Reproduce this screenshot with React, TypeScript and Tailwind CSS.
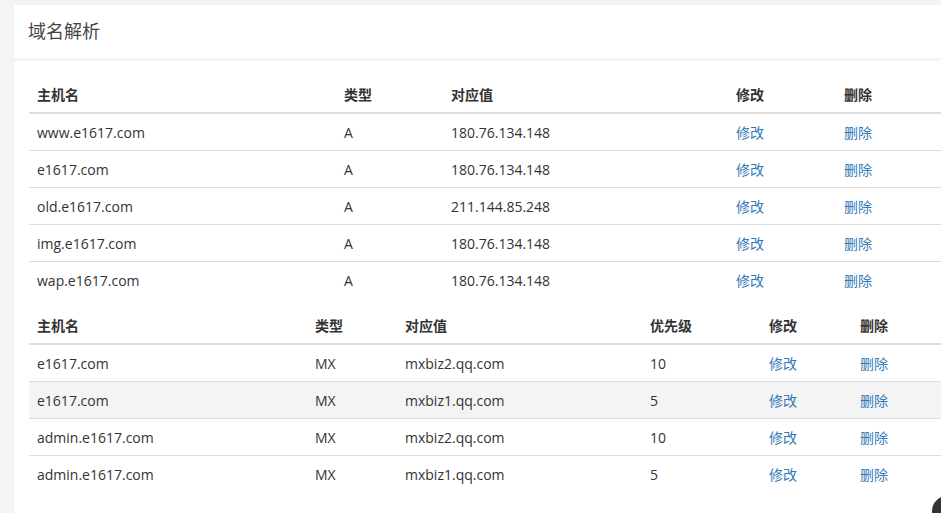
const t1 = [
  ["www.e1617.com", "A", "180.76.134.148"],
  ["e1617.com", "A", "180.76.134.148"],
  ["old.e1617.com", "A", "211.144.85.248"],
  ["img.e1617.com", "A", "180.76.134.148"],
  ["wap.e1617.com", "A", "180.76.134.148"],
];
const t2 = [
  ["e1617.com", "MX", "mxbiz2.qq.com", "10"],
  ["e1617.com", "MX", "mxbiz1.qq.com", "5"],
  ["admin.e1617.com", "MX", "mxbiz2.qq.com", "10"],
  ["admin.e1617.com", "MX", "mxbiz1.qq.com", "5"],
];
const g1 = "grid grid-cols-[307px_107px_285px_108px_1fr]";
const g2 = "grid grid-cols-[278px_90px_245px_119px_91px_1fr]";
const cell = "px-2 h-[36px] flex items-center";

export default function App() {
  return (
    <div className="w-[941px] h-[513px] overflow-hidden bg-[#f4f4f4] pt-[5px] pl-[14px] text-[14px] text-[#333] relative" style={{ fontFamily: '"Open Sans", "Noto Sans CJK SC", sans-serif' }}>
      <div className="bg-white h-[53px] flex items-center px-[14px] text-[18px] text-[#444]">域名解析</div>
      <div className="bg-white mt-[3px] h-[460px] pl-[15px] pt-[15px]">
        <div className={`${g1} font-bold border-b-2 border-[#ddd]`}>
          {["主机名", "类型", "对应值", "修改", "删除"].map((h) => (
            <div key={h} className={`${cell} h-[35px]`}>{h}</div>
          ))}
        </div>
        {t1.map((r, i) => (
          <div key={i} className={`${g1} ${i < t1.length - 1 ? "border-b border-[#ddd]" : ""}`}>
            {r.map((c, j) => <div key={j} className={cell}>{c}</div>)}
            <div className={`${cell} text-[#337ab7]`}>修改</div>
            <div className={`${cell} text-[#337ab7]`}>删除</div>
          </div>
        ))}
        <div className={`${g2} font-bold border-b-2 border-[#ddd] mt-[9px]`}>
          {["主机名", "类型", "对应值", "优先级", "修改", "删除"].map((h) => (
            <div key={h} className={`${cell} h-[35px]`}>{h}</div>
          ))}
        </div>
        {t2.map((r, i) => (
          <div key={i} className={`${g2} ${i < t2.length - 1 ? "border-b border-[#ddd]" : ""} ${i === 1 ? "bg-[#f4f4f4]" : ""}`}>
            {r.map((c, j) => <div key={j} className={cell}>{c}</div>)}
            <div className={`${cell} text-[#337ab7]`}>修改</div>
            <div className={`${cell} text-[#337ab7]`}>删除</div>
          </div>
        ))}
      </div>
      <div className="absolute left-[932px] top-[496px] w-[30px] h-[30px] rounded-full bg-[#333]" />
    </div>
  );
}
